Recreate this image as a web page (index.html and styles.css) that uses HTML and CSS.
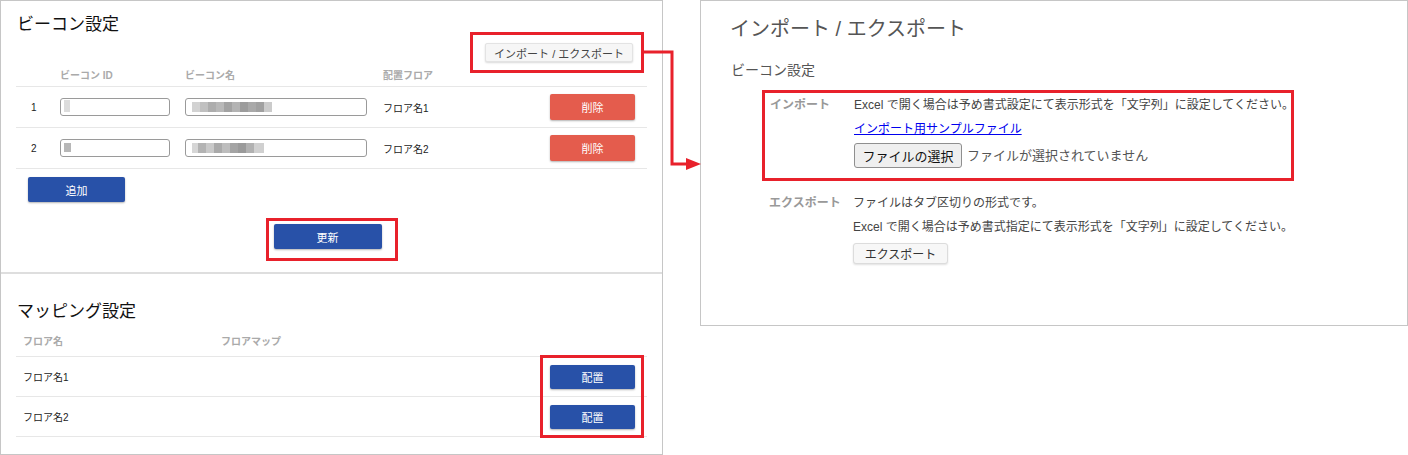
FILE: index.html
```html
<!DOCTYPE html>
<html lang="ja">
<head>
  <meta charset="UTF-8">
  <title>ビーコン設定</title>
  <link rel="stylesheet" href="styles.css">
</head>
<body>
  <div class="page">
    <div class="panel left">
      <section class="beacon">
        <h2 class="title">ビーコン設定</h2>
        <div class="toolbar">
          <button class="btn-light">インポート / エクスポート</button>
        </div>
        <div class="table beacon-table">
          <div class="row head">
            <span></span><span>ビーコン ID</span><span>ビーコン名</span><span>配置フロア</span><span></span>
          </div>
          <div class="row">
            <span class="num">1</span>
            <div class="field field-id"><i class="mosaic id-1"></i></div>
            <div class="field field-name"><i class="mosaic name-1"></i></div>
            <span>フロア名1</span>
            <button class="btn-red">削除</button>
          </div>
          <div class="row">
            <span class="num">2</span>
            <div class="field field-id"><i class="mosaic id-2"></i></div>
            <div class="field field-name"><i class="mosaic name-2"></i></div>
            <span>フロア名2</span>
            <button class="btn-red">削除</button>
          </div>
        </div>
        <button class="btn-blue btn-add">追加</button>
        <div class="mark mark-update">
          <button class="btn-blue btn-update">更新</button>
        </div>
      </section>

      <section class="mapping">
        <h2 class="title">マッピング設定</h2>
        <div class="table map-table">
          <div class="row head">
            <span>フロア名</span><span>フロアマップ</span><span></span>
          </div>
          <div class="row">
            <span>フロア名1</span><span></span>
            <button class="btn-blue btn-place">配置</button>
          </div>
          <div class="row">
            <span>フロア名2</span><span></span>
            <button class="btn-blue btn-place">配置</button>
          </div>
        </div>
      </section>

      <div class="mark mark-io"></div>
      <div class="mark mark-place"></div>
    </div>

    <div class="panel right">
      <h1 class="io-title">インポート / エクスポート</h1>
      <h3 class="io-sub">ビーコン設定</h3>
      <div class="io-row mark-import">
        <span class="io-label">インポート</span>
        <div class="io-body">
          <p>Excel で開く場合は予め書式設定にて表示形式を「文字列」に設定してください。</p>
          <p><a href="#">インポート用サンプルファイル</a></p>
          <div class="file">
            <button class="btn-file">ファイルの選択</button>
            <span>ファイルが選択されていません</span>
          </div>
        </div>
      </div>
      <div class="io-row export">
        <span class="io-label">エクスポート</span>
        <div class="io-body">
          <p>ファイルはタブ区切りの形式です。</p>
          <p>Excel で開く場合は予め書式指定にて表示形式を「文字列」に設定してください。</p>
          <button class="btn-export">エクスポート</button>
        </div>
      </div>
    </div>

    <svg class="connector" width="1408" height="455" viewBox="0 0 1408 455">
      <path d="M643 52 H672 V164 H688" fill="none" stroke="#e8212b" stroke-width="3"/>
      <polygon points="686,158 701,164 686,170" fill="#e8212b"/>
    </svg>
  </div>
</body>
</html>
```

FILE: styles.css
```css
body {
  margin: 0;
  font-family: "Liberation Sans", "Noto Sans CJK JP", sans-serif;
  background: #fff;
  color: #222;
}
.page {
  position: relative;
  display: flex;
  align-items: flex-start;
  gap: 37px;
}
.panel {
  border: 1px solid #c6c6c6;
  position: relative;
}
.left {
  width: 661px;
  height: 453px;
}
.right {
  width: 706px;
  height: 324px;
}
h1, h2, h3, p {
  margin: 0;
  font-weight: normal;
}
button {
  font-family: inherit;
  cursor: pointer;
}

/* left panel */
.title {
  font-size: 17px;
  line-height: 24px;
  padding-left: 16px;
  color: #111;
}
.beacon {
  padding-top: 12px;
  height: 259px;
  border-bottom: 2px solid #dedede;
}
.toolbar {
  display: flex;
  justify-content: flex-end;
  margin-top: 6px;
  padding-right: 29px;
}
.btn-light {
  height: 19px;
  width: 148px;
  font-size: 11px;
  color: #444;
  background: #f6f6f6;
  border: 1px solid #e3e3e3;
  border-radius: 2px;
  box-shadow: 0 1px 2px rgba(0, 0, 0, 0.15);
  padding: 0;
}
.table {
  margin: 0 15px;
  font-size: 10px;
}
.row {
  display: grid;
  align-items: center;
  height: 40px;
  border-bottom: 1px solid #e7e7e7;
  padding-right: 12px;
}
.beacon-table .row {
  grid-template-columns: 44px 125px 198px 1fr 85px;
}
.beacon-table .head {
  height: 24px;
}
.head {
  font-weight: bold;
  color: #aaa;
}
.num {
  padding-left: 15px;
}
.field {
  height: 16px;
  border: 1px solid #9a9a9a;
  border-radius: 3px;
  position: relative;
}
.field-id {
  width: 108px;
}
.field-name {
  width: 180px;
}
.mosaic {
  position: absolute;
  display: block;
}
.id-1 {
  left: 3px;
  top: 1px;
  width: 6px;
  height: 12px;
  background: #dcdcdc;
}
.id-2 {
  left: 3px;
  top: 3px;
  width: 7px;
  height: 9px;
  background: #b7b7b7;
}
.name-1 {
  left: 6px;
  top: 3px;
  width: 80px;
  height: 10px;
  background: linear-gradient(to right, #d2d2d2 0 8px, #c0c0c0 8px 16px, #adadad 16px 24px, #b8b8b8 24px 32px, #a2a2a2 32px 40px, #b3b3b3 40px 48px, #9c9c9c 48px 56px, #a9a9a9 56px 64px, #a0a0a0 64px 72px, #cbcbcb 72px 80px);
}
.name-2 {
  left: 6px;
  top: 3px;
  width: 72px;
  height: 10px;
  background: linear-gradient(to right, #d6d6d6 0 6px, #b3b3b3 6px 14px, #c9c9c9 14px 22px, #aaaaaa 22px 30px, #bdbdbd 30px 38px, #a4a4a4 38px 46px, #9a9a9a 46px 54px, #b1b1b1 54px 62px, #d0d0d0 62px 72px);
}
.btn-red, .btn-blue {
  color: #fff;
  border: none;
  border-radius: 2px;
  font-size: 11px;
  padding: 0;
  box-shadow: 0 1px 2px rgba(0, 0, 0, 0.3);
}
.btn-red {
  height: 26px;
  width: 85px;
  background: #e45c4d;
}
.btn-blue {
  background: #2851a8;
}
.btn-add {
  display: block;
  width: 97px;
  height: 25px;
  margin: 8px 0 0 27px;
}
.mark {
  border: 3px solid #e8212b;
  box-sizing: border-box;
}
.mark-update {
  width: 132px;
  height: 43px;
  margin: 16px auto 0;
  padding: 3px 0 0 5px;
}
.btn-update {
  width: 108px;
  height: 25px;
}
.mapping {
  padding-top: 26px;
}
.map-table .row {
  grid-template-columns: 205px 1fr 85px;
  height: 39px;
}
.map-table .head {
  height: 32px;
}
.map-table .row > span:first-child {
  padding-left: 7px;
}
.btn-place {
  width: 85px;
  height: 24px;
}
.mark-io {
  position: absolute;
  left: 469px;
  top: 31px;
  width: 174px;
  height: 41px;
}
.mark-place {
  position: absolute;
  left: 539px;
  top: 354px;
  width: 104px;
  height: 83px;
}

/* right panel */
.io-title {
  font-size: 20px;
  line-height: 28px;
  color: #555;
  margin: 14px 0 0 29px;
}
.io-sub {
  font-size: 14px;
  line-height: 20px;
  color: #555;
  margin: 17px 0 0 30px;
}
.io-row {
  display: grid;
  grid-template-columns: 84px 1fr;
  font-size: 12px;
  line-height: 24px;
  color: #444;
  white-space: nowrap;
}
.io-label {
  color: #999;
  font-weight: bold;
}
.mark-import {
  width: 532px;
  height: 91px;
  margin: 10px 0 0 61px;
  padding: 0 0 0 5px;
  border: 3px solid #e8212b;
  box-sizing: border-box;
}
.io-body a {
  color: #0000ee;
}
.file {
  display: flex;
  align-items: center;
  gap: 5px;
  margin-top: 2px;
  font-size: 13px;
  color: #555;
}
.btn-file {
  height: 25px;
  width: 108px;
  font-size: 13px;
  color: #111;
  background: #efefef;
  border: 1px solid #8f8f8f;
  border-radius: 3px;
  padding: 0;
}
.export {
  margin: 10px 0 0 68px;
}
.btn-export {
  margin-top: 4px;
  width: 95px;
  height: 21px;
  font-size: 12px;
  color: #333;
  background: #f7f7f7;
  border: 1px solid #dcdcdc;
  border-radius: 3px;
  box-shadow: 0 1px 2px rgba(0, 0, 0, 0.12);
  padding: 0;
}
.connector {
  position: absolute;
  left: 0;
  top: 0;
  pointer-events: none;
}
```
